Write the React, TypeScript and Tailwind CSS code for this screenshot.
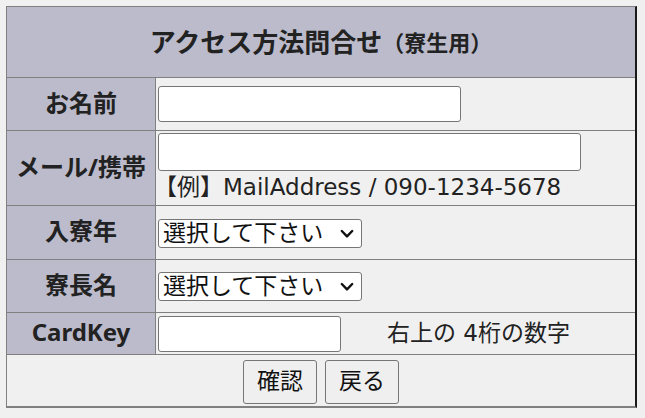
import React from "react";

const font = { fontFamily: '"DejaVu Sans", "Noto Sans CJK JP", sans-serif' };
const labelFont = { fontFamily: '"Noto Sans", "Noto Sans CJK JP", sans-serif' };

function Chevron() {
  return (
    <svg width="14" height="10" viewBox="0 0 14 10" className="pointer-events-none absolute right-[8px] top-[10px]">
      <path d="M1.8 2 L7 7.4 L12.2 2" fill="none" stroke="#111" strokeWidth="2.4" strokeLinecap="round" strokeLinejoin="round" />
    </svg>
  );
}

function Select() {
  return (
    <div className="relative h-[29px] w-[204px]">
      <div className="h-[29px] w-[204px] rounded-[3px] border border-[#767676] bg-white pl-[4px] text-[23px] leading-[26px] text-[#111]">
        選択して下さい
      </div>
      <Chevron />
    </div>
  );
}

function Label({ children }: { children: React.ReactNode }) {
  return (
    <div className="flex w-[149px] shrink-0 items-center justify-center border-r border-[#808080] bg-[#bbbbcb] pb-[3px] text-[24px] font-bold leading-[30px] text-[#222]" style={labelFont}>
      {children}
    </div>
  );
}

export default function App() {
  return (
    <div className="h-[418px] w-[645px] bg-[#f0f0f0] pl-[6px] pt-[6px] text-[#222]" style={font}>
      <div className="flex w-[631px] flex-col border-l border-t border-b-2 border-r-2 border-l-[#808080] border-t-[#808080] border-b-[#808080] border-r-[#1a1a1a] bg-[#f0f0f0]">
        <div className="flex h-[71px] items-center justify-center border-b border-[#808080] bg-[#bbbbcb] pb-[2px] font-bold" style={{ fontFamily: '"Noto Sans CJK JP", sans-serif' }}>
          <span className="text-[26px] leading-none">アクセス方法問合せ</span>
          <span className="text-[22px] leading-none">（寮生用）</span>
        </div>

        <div className="flex h-[53px] border-b border-[#808080]">
          <Label>お名前</Label>
          <div className="flex items-center pl-[2px]">
            <input className="h-[36px] w-[303px] rounded-[3px] border border-[#767676] bg-white" />
          </div>
        </div>

        <div className="flex h-[75px] border-b border-[#808080]">
          <Label>メール/携帯</Label>
          <div className="flex flex-col pl-[2px] pt-[2px]">
            <input className="h-[38px] w-[423px] rounded-[3px] border border-[#767676] bg-white" />
            <div className="mt-[2px] -ml-[4px] whitespace-nowrap text-[23px] leading-[28px]">【例】MailAddress / 090-1234-5678</div>
          </div>
        </div>

        <div className="flex h-[54px] border-b border-[#808080]">
          <Label>入寮年</Label>
          <div className="flex items-center pl-[2px] pt-[1px]">
            <Select />
          </div>
        </div>

        <div className="flex h-[53px] border-b border-[#808080]">
          <Label>寮長名</Label>
          <div className="flex items-center pl-[2px] pt-[1px]">
            <Select />
          </div>
        </div>

        <div className="flex h-[42px] border-b border-[#808080]">
          <Label>CardKey</Label>
          <div className="flex items-center pl-[2px]">
            <input className="h-[36px] w-[183px] rounded-[3px] border border-[#767676] bg-white" />
            <span className="ml-[46px] whitespace-nowrap text-[23px] leading-none">右上の 4桁の数字</span>
          </div>
        </div>

        <div className="flex h-[51px] items-center justify-center gap-[8px] pt-[2px]">
          <button className="h-[44px] w-[74px] rounded-[3px] border border-[#767676] bg-[#efefef] text-[23px] leading-none text-[#111]">確認</button>
          <button className="h-[44px] w-[74px] rounded-[3px] border border-[#767676] bg-[#efefef] text-[23px] leading-none text-[#111]">戻る</button>
        </div>
      </div>
    </div>
  );
}
